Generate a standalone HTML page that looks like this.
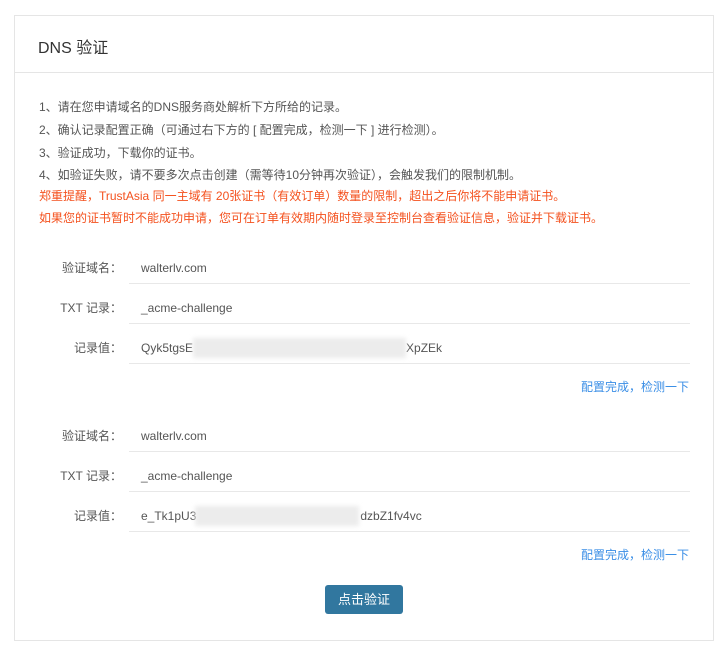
<!DOCTYPE html>
<html><head><meta charset="utf-8"><style>
body{margin:0;background:#fff;font-family:"Liberation Sans","Noto Sans CJK SC",sans-serif;font-size:12px;color:#555;}
.panel{position:absolute;left:14px;top:15px;width:698px;height:624px;border:1px solid #e5e5e5;}
.hd{position:absolute;left:0;top:0;right:0;height:56px;border-bottom:1px solid #e5e5e5;}
.hd span{position:absolute;left:23px;top:18px;font-size:16px;color:#333;}
.t{position:absolute;left:24px;white-space:nowrap;line-height:16px;}
.r{color:#f4511e;}
.lab{position:absolute;width:107px;text-align:right;left:0;color:#555;line-height:16px;}
.val{position:absolute;left:126px;color:#555;line-height:16px;}
.ln{position:absolute;left:114px;width:561px;height:1px;background:#e8e8e8;}
.lk{position:absolute;right:24px;color:#3a8ee6;line-height:16px;}
.blur{position:absolute;background:#ececec;filter:blur(2px);}
.btn{position:absolute;left:310px;top:569px;width:78px;height:29px;background:#31779f;border-radius:3px;color:#fff;text-align:center;line-height:29px;font-size:13px;}
</style></head><body>
<div class="panel">
<div class="hd"><span>DNS 验证</span></div>
<div class="t" style="top:83px">1、请在您申请域名的DNS服务商处解析下方所给的记录。</div>
<div class="t" style="top:106px">2、确认记录配置正确（可通过右下方的 [ 配置完成，检测一下 ] 进行检测）。</div>
<div class="t" style="top:129px">3、验证成功，下载你的证书。</div>
<div class="t" style="top:151px">4、如验证失败，请不要多次点击创建（需等待10分钟再次验证），会触发我们的限制机制。</div>
<div class="t r" style="top:172px">郑重提醒，TrustAsia 同一主域有 20张证书（有效订单）数量的限制，超出之后你将不能申请证书。</div>
<div class="t r" style="top:194px">如果您的证书暂时不能成功申请，您可在订单有效期内随时登录至控制台查看验证信息，验证并下载证书。</div>

<div class="lab" style="top:244px">验证域名：</div><div class="val" style="top:244px">walterlv.com</div><div class="ln" style="top:267px"></div>
<div class="lab" style="top:284px">TXT 记录：</div><div class="val" style="top:284px">_acme-challenge</div><div class="ln" style="top:307px"></div>
<div class="lab" style="top:324px">记录值：</div><div class="val" style="top:324px">Qyk5tgsE<span style="display:inline-block;width:213px"></span>XpZEk</div><div class="blur" style="left:178px;top:322px;width:213px;height:20px"></div><div class="ln" style="top:347px"></div>
<div class="lk" style="top:363px">配置完成，检测一下</div>

<div class="lab" style="top:412px">验证域名：</div><div class="val" style="top:412px">walterlv.com</div><div class="ln" style="top:435px"></div>
<div class="lab" style="top:452px">TXT 记录：</div><div class="val" style="top:452px">_acme-challenge</div><div class="ln" style="top:475px"></div>
<div class="lab" style="top:492px">记录值：</div><div class="val" style="top:492px">e_Tk1pU3<span style="display:inline-block;width:164px"></span>dzbZ1fv4vc</div><div class="blur" style="left:180px;top:490px;width:164px;height:20px"></div><div class="ln" style="top:515px"></div>
<div class="lk" style="top:531px">配置完成，检测一下</div>

<div class="btn">点击验证</div>
</div>
</body></html>
